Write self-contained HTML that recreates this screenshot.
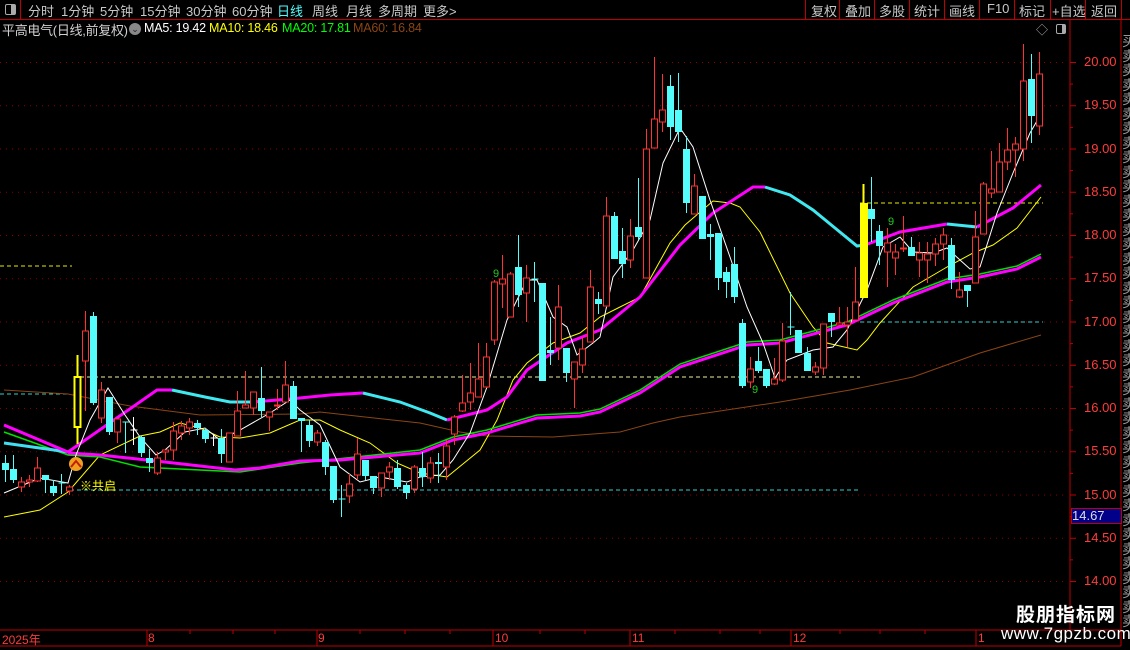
<!DOCTYPE html>
<html><head><meta charset="utf-8"><style>
body{margin:0;background:#000;width:1130px;height:650px;overflow:hidden;position:relative;font-family:"Liberation Sans","Noto Sans CJK SC",sans-serif}
.t{position:absolute;white-space:nowrap;font-size:13px;color:#c8c8c8;top:1px}
.b{position:absolute;top:0;height:19px;border-left:1px solid #c00000}
.l{position:absolute;font-size:12.5px;top:21px;white-space:nowrap;letter-spacing:-0.2px}
.ax{position:absolute;left:1084px;font-size:13px;color:#ff3c3c}
</style></head><body>
<div style="position:absolute;left:0;top:0;width:1130px;height:19px;border-bottom:1px solid #c00000"></div>
<div style="position:absolute;left:0;top:0;width:20px;height:19px;border-right:1px solid #c00000"></div>
<div style="position:absolute;left:5px;top:4px;width:9px;height:9px;border:1px solid #aaa;border-radius:2px"><div style="position:absolute;right:0;top:0;width:4px;height:9px;background:#aaa"></div></div>
<span class="t" style="left:28px">分时</span><span class="t" style="left:61px">1分钟</span><span class="t" style="left:100px">5分钟</span><span class="t" style="left:140px">15分钟</span><span class="t" style="left:186px">30分钟</span><span class="t" style="left:232px">60分钟</span><span class="t" style="left:277px;color:#54fcfc">日线</span><span class="t" style="left:312px">周线</span><span class="t" style="left:346px">月线</span><span class="t" style="left:378px">多周期</span><span class="t" style="left:423px">更多&gt;</span>
<div class="b" style="left:805px"></div><div class="b" style="left:839px"></div><div class="b" style="left:874px"></div><div class="b" style="left:909px"></div><div class="b" style="left:944px"></div><div class="b" style="left:979px"></div><div class="b" style="left:1014px"></div><div class="b" style="left:1050px"></div><div class="b" style="left:1085px"></div><div class="b" style="left:1121px"></div>
<span class="t" style="left:811px">复权</span><span class="t" style="left:845px">叠加</span><span class="t" style="left:879px">多股</span><span class="t" style="left:914px">统计</span><span class="t" style="left:949px">画线</span><span class="t" style="left:987px">F10</span><span class="t" style="left:1019px">标记</span><span class="t" style="left:1052px">+自选</span><span class="t" style="left:1091px">返回</span>
<span style="position:absolute;left:2px;top:20px;color:#d0d0d0;font-size:13px;white-space:nowrap;letter-spacing:-0.3px">平高电气(日线,前复权)</span>
<div style="position:absolute;left:129px;top:23px;width:12px;height:12px;border-radius:50%;background:#888;color:#222;font-size:9px;text-align:center;line-height:12px">⌄</div>
<span class="l" style="left:144px;color:#fff">MA5: 19.42</span><span class="l" style="left:209px;color:#ffff00">MA10: 18.46</span><span class="l" style="left:282px;color:#00ff00">MA20: 17.81</span><span class="l" style="left:353px;color:#8b4513">MA60: 16.84</span>
<span style="position:absolute;left:1036px;top:21px;color:#aaa;font-size:12px">◇</span>
<div style="position:absolute;left:1056px;top:24px;width:8px;height:8px;border:1px solid #aaa;border-radius:2px"><div style="position:absolute;right:0;top:0;width:3px;height:8px;background:#aaa"></div></div>
<div style="position:absolute;left:1122px;top:34px;width:8px;height:596px;overflow:hidden;color:#999;font-size:14px;line-height:14.5px">买卖卖卖卖卖卖卖卖卖卖卖卖卖卖卖卖卖卖卖卖卖卖卖卖卖卖卖卖卖卖卖卖卖卖卖卖卖卖卖卖</div>
<svg id="s" width="1130" height="650" style="position:absolute;left:0;top:0"></svg>
<div class="ax" style="top:54px">20.00</div><div class="ax" style="top:97px">19.50</div><div class="ax" style="top:141px">19.00</div><div class="ax" style="top:184px">18.50</div><div class="ax" style="top:227px">18.00</div><div class="ax" style="top:270px">17.50</div><div class="ax" style="top:314px">17.00</div><div class="ax" style="top:357px">16.50</div><div class="ax" style="top:400px">16.00</div><div class="ax" style="top:443px">15.50</div><div class="ax" style="top:487px">15.00</div><div class="ax" style="top:530px">14.50</div><div class="ax" style="top:573px">14.00</div>
<div style="position:absolute;left:1071px;top:508px;width:49px;height:14px;background:#00008b;border:1px solid #c00000;color:#ddd;font-size:13px;line-height:14px">14.67</div>
<span style="position:absolute;left:80px;top:477px;color:#ffff00;font-size:12px">※共启</span>
<span style="position:absolute;left:493px;top:268px;color:#22cc22;font-size:11px">9</span>
<span style="position:absolute;left:888px;top:216px;color:#22cc22;font-size:11px">9</span>
<span style="position:absolute;left:752px;top:384px;color:#22cc22;font-size:11px">9</span>
<span style="position:absolute;left:2px;top:631px;color:#ff3c3c;font-size:12px">2025年</span>
<span style="position:absolute;left:148px;top:631px;color:#ff3c3c;font-size:12px">8</span><span style="position:absolute;left:318px;top:631px;color:#ff3c3c;font-size:12px">9</span><span style="position:absolute;left:495px;top:631px;color:#ff3c3c;font-size:12px">10</span><span style="position:absolute;left:632px;top:631px;color:#ff3c3c;font-size:12px">11</span><span style="position:absolute;left:793px;top:631px;color:#ff3c3c;font-size:12px">12</span><span style="position:absolute;left:978px;top:631px;color:#ff3c3c;font-size:12px">1</span>
<div style="position:absolute;left:1016px;top:600px;color:#fff;font-size:19px;font-weight:bold;letter-spacing:1px">股朋指标网</div>
<div style="position:absolute;left:1001px;top:624px;color:#fff;font-size:17px;letter-spacing:0.5px">www.7gpzb.com</div>
<script>
var s=document.getElementById('s'),h='';
function L(x1,y1,x2,y2,c,w,d){h+='<line x1="'+x1+'" y1="'+y1+'" x2="'+x2+'" y2="'+y2+'" stroke="'+c+'" stroke-width="'+(w||1)+'"'+(d?' stroke-dasharray="'+d+'"':'')+'/>';}
function P(pts,c,w){h+='<polyline fill="none" stroke="'+c+'" stroke-width="'+w+'" points="'+pts.map(function(p){return p.join(',')}).join(' ')+'"/>';}
for(var k=0;k<13;k++){var y=62.5+k*43.25;L(0,y,1066,y,'#8b0000',1,'1 5');L(1070,y,1076,y,'#c00000');if(k<12)L(1070,y+21.6,1073,y+21.6,'#c00000');}
L(1070,19,1070,630,'#c00000');L(1121,19,1121,646,'#c00000');
L(0,630,1121,630,'#c00000');L(0,646,1121,646,'#c00000');
[147,317,493,630,791,976].forEach(function(x){L(x,630,x,646,'#c00000')});
[190,233,275,360,405,450,540,585,675,720,760,840,880,925,1020].forEach(function(x){L(x,630,x,634,'#c00000')});
L(0,266,72,266,'#e8e800',1,'4 3');L(0,394,70,394,'#30d0d0',1,'4 3');
L(80,377,860,377,'#f0f0a0',1,'4 3');L(70,490,860,490,'#30d0d0',1,'4 3');
L(860,203,1043,203,'#e8e800',1,'4 3');L(860,322,1043,322,'#30d0d0',1,'4 3');
P([[4,390],[68,394],[130,406],[200,415],[300,414],[320,412],[420,423],[460,432],[487,436],[553,437],[620,432],[653,423],[680,417],[780,402],[850,390],[913,377],[980,353],[1041,335]],'#8b4513',1);
P([[4,517],[40,510],[68,492],[100,455],[140,436],[160,432],[180,423],[200,428],[220,437],[240,438],[270,433],[300,420],[320,420],[340,430],[370,443],[397,463],[420,473],[447,477],[480,450],[497,420],[513,380],[527,363],[553,343],[580,333],[600,317],[620,307],[640,297],[670,243],[685,225],[713,201],[730,203],[740,207],[760,232],[790,293],[813,327],[827,343],[857,350],[867,340],[880,323],[913,287],[947,267],[973,253],[993,245],[1017,228],[1041,197]],'#ffff00',1);
P([[4,432],[68,455],[100,457],[140,467],[240,472],[300,463],[420,450],[453,437],[487,430],[520,420],[537,415],[580,413],[600,409],[640,390],[680,364],[747,342],[780,340],[847,322],[893,300],[947,279],[980,274],[1017,266],[1041,254]],'#00e000',1.5);
P([[4,443],[68,452]],'#40e0f0',3);
P([[68,453],[100,455],[165,462],[235,470],[260,468],[300,461],[340,460],[420,453],[453,440],[487,433],[520,423],[537,418],[580,416],[600,412],[640,393],[680,367],[747,345],[780,343],[847,325],[893,303],[947,282],[980,277],[1017,269],[1041,257]],'#ff00ff',3);
P([[4,425],[30,436],[68,452],[157,390],[172,390]],'#ff00ff',3);
P([[172,390],[205,397],[230,402],[252,402]],'#40e8f0',3);
P([[252,402],[290,399],[330,395],[363,393]],'#ff00ff',3);
P([[363,393],[400,402],[430,413],[447,420]],'#40e8f0',3);
P([[447,420],[487,410],[507,397],[527,370],[567,343],[600,330],[640,297],[680,245],[713,213],[753,187],[765,187]],'#ff00ff',3);
P([[765,187],[790,195],[813,210],[835,228],[857,246],[865,245]],'#40e8f0',3);
P([[865,245],[900,232],[947,224]],'#ff00ff',3);
P([[947,224],[977,227]],'#40e8f0',3);
P([[977,227],[1013,208],[1041,185]],'#ff00ff',3);
P([[4,493],[40,478],[68,483],[76,455],[90,420],[108,388],[125,415],[140,437],[156,455],[165,450],[185,432],[205,428],[220,440],[240,430],[270,413],[290,400],[300,410],[320,425],[340,467],[360,482],[380,477],[407,482],[420,477],[440,475],[453,460],[470,433],[487,387],[507,320],[527,280],[537,280],[553,317],[567,327],[577,355],[593,343],[600,337],[613,277],[633,250],[650,220],[663,163],[680,128],[693,147],[710,200],[730,257],[747,307],[763,343],[775,378],[787,360],[813,350],[833,347],[847,330],[867,290],[883,247],[900,237],[913,252],[933,253],[947,248],[960,260],[970,269],[980,267],[997,213],[1013,173],[1030,133],[1041,114]],'#ffffff',1);
var D=[[0,'c',463,470,455,482],[1,'c',469,480,455,483],[2,'r',482,487,477,492],[3,'r',480,482,475,487],[4,'r',468,481,457,482],[5,'c',475,480,475,493],[6,'c',486,493,480,496],[7,'x',483,483,474,494],[8,'r',487,491,485,495],[9,'y',377,427,355,444],[10,'r',331,361,311,411],[11,'c',316,403,312,405],[12,'r',390,418,382,423],[13,'c',397,432,397,435],[14,'r',419,432,419,443],[15,'x',422,422,422,453],[16,'w',430,430,417,445],[17,'c',437,453,436,457],[18,'c',458,463,449,472],[19,'r',458,473,452,475],[20,'r',450,452,450,460],[21,'r',431,450,422,460],[22,'r',426,433,421,440],[23,'r',422,428,418,435],[24,'c',423,428,420,435],[25,'c',430,439,428,443],[26,'w',438,438,434,446],[27,'c',438,454,429,463],[28,'r',433,462,433,462],[29,'r',411,436,391,436],[30,'r',405,408,371,408],[31,'r',392,408,392,415],[32,'c',398,411,367,417],[33,'r',412,417,412,431],[34,'r',405,406,389,410],[35,'r',385,402,361,402],[36,'c',386,419,381,419],[37,'c',418,421,418,452],[38,'c',425,441,420,447],[39,'r',433,442,430,446],[40,'c',442,467,440,475],[41,'c',466,500,466,503],[42,'x',499,499,485,517],[43,'r',484,496,474,503],[44,'r',454,475,438,480],[45,'c',460,476,460,480],[46,'c',476,488,476,494],[47,'r',473,488,473,497],[48,'r',467,472,462,480],[49,'c',468,487,460,489],[50,'c',485,493,483,499],[51,'r',467,489,465,493],[52,'c',468,477,452,487],[53,'r',463,478,457,483],[54,'c',462,464,453,483],[55,'r',446,467,440,480],[56,'r',417,434,415,445],[57,'r',403,411,375,412],[58,'r',393,402,363,410],[59,'r',379,397,343,397],[60,'r',357,387,343,388],[61,'r',282,340,280,345],[62,'r',279,284,255,308],[63,'r',274,317,272,317],[64,'c',267,295,235,307],[65,'r',278,293,265,322],[66,'x',279,279,262,302],[67,'c',283,381,283,381],[68,'c',350,353,317,365],[69,'r',307,348,285,360],[70,'c',348,373,348,382],[71,'r',362,379,362,408],[72,'r',349,365,337,373],[73,'r',287,342,270,342],[74,'c',299,304,292,314],[75,'r',216,306,197,307],[76,'c',216,259,212,259],[77,'c',251,264,228,278],[78,'r',236,260,219,268],[79,'c',227,237,178,240],[80,'r',149,278,129,278],[81,'r',119,148,57,148],[82,'r',110,122,74,132],[83,'c',86,127,75,140],[84,'c',110,132,73,142],[85,'c',149,203,136,213],[86,'r',186,214,174,214],[87,'c',196,239,196,239],[88,'c',234,237,224,260],[89,'c',233,278,233,290],[90,'c',272,282,267,298],[91,'c',264,297,247,303],[92,'c',323,386,319,388],[93,'r',369,382,357,388],[94,'c',361,371,347,373],[95,'c',369,386,369,388],[96,'r',379,384,358,385],[97,'r',341,380,323,382],[98,'x',327,327,292,335],[99,'c',330,353,330,353],[100,'c',353,371,347,371],[101,'r',367,372,362,375],[102,'r',324,368,324,375],[103,'c',313,322,313,337],[104,'r',323,325,307,325],[105,'r',322,325,307,347],[106,'r',302,320,267,320],[107,'Y',203,298,184,298],[108,'c',209,219,177,242],[109,'c',231,246,225,265],[110,'r',243,252,228,287],[111,'r',252,258,244,275],[112,'r',248,249,216,252],[113,'c',247,256,237,256],[114,'r',253,260,242,277],[115,'r',254,260,242,283],[116,'r',244,254,238,266],[117,'r',235,244,228,260],[118,'c',245,280,238,289],[119,'r',290,297,272,298],[120,'c',285,291,285,307],[121,'r',237,283,211,283],[122,'r',184,234,182,234],[123,'r',189,193,151,198],[124,'r',162,192,143,192],[125,'r',150,162,128,170],[126,'r',144,150,137,177],[127,'r',81,149,44,161],[128,'c',79,116,54,143],[129,'r',74,126,52,135]];
D.forEach(function(d){var x=Math.round(4.5+8.02*d[0])+0.5,t=d[1],a=d[2],b=d[3];
var col=t=='r'?'#ff3232':(t=='y'||t=='Y')?'#ffff00':t=='w'?'#ffffff':'#54fcfc';
var ww=(t=='Y'||t=='y')?2:1;
if(t=='r'||t=='y'){L(x,d[4],x,a,col,ww);L(x,b,x,d[5],col,ww);h+='<rect x="'+(x-3)+'" y="'+a+'" width="6" height="'+Math.max(b-a,1)+'" fill="#000" stroke="'+col+'" stroke-width="'+ww+'"/>';}
else if(t=='x'||t=='w'){L(x,d[4],x,d[5],col);L(x-3,a,x+4,a,col);}
else{L(x,d[4],x,d[5],col,t=='Y'?2:1);h+='<rect x="'+(x-3.5)+'" y="'+a+'" width="'+(t=='Y'?8:7)+'" height="'+Math.max(b-a,1)+'" fill="'+col+'"/>';}
});
h+='<circle cx="76" cy="464" r="7" fill="#f0a020"/><path d="M71 467 L76 461 L81 467" stroke="#c02000" stroke-width="2" fill="none"/>';
s.innerHTML=h;
</script>
</body></html>
